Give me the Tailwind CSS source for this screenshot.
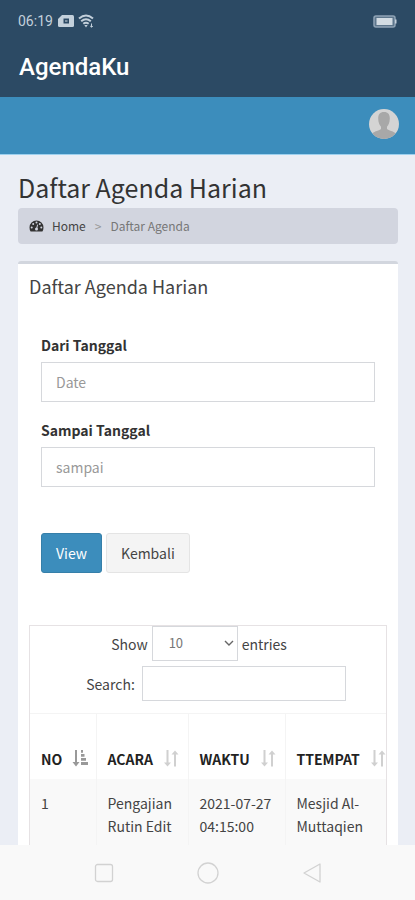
<!DOCTYPE html>
<html lang="id">
<head>
<meta charset="utf-8">
<meta name="viewport" content="width=device-width, initial-scale=1">
<title>AgendaKu</title>
<script src="https://cdn.jsdelivr.net/npm/@tailwindcss/browser@4"></script>
</head>
<body class="flex h-dvh flex-col overflow-hidden bg-[#ebeef5] font-['Noto_Sans_CJK_JP',sans-serif] text-sm text-[#444]">
  <header class="shrink-0 bg-[#2c4a64]">
    <div class="flex h-9 items-end justify-between px-[18px] pb-1 font-[Roboto,sans-serif] text-[#c3d0db]">
      <div class="flex items-center gap-1">
        <span class="text-[14px] leading-[22px]">06:19</span>
        <svg class="ml-px h-3 w-4" viewBox="0 0 16 12" aria-hidden="true"><path fill="currentColor" d="M4 0h10.500q1.500 0 1.500 1.500v9q0 1.500-1.500 1.500h-13Q0 12 0 10.500V4z"/><path fill="#2c4a64" d="M5.500 3.500h5.500v5H5.500z"/><path fill="#7d91a3" d="M7 5h2.500v2H7z"/></svg>
        <svg class="h-[14px] w-[17px]" viewBox="0 0 17 14" fill="none" stroke="currentColor" stroke-width="2" aria-hidden="true"><path d="M1 4.500q7-6 14 0M3.200 7.200q4.800-4 9.600 0M5.300 9.800q2.700-2.200 5.400 0"/><path d="M6.300 11h3.400L8 13.500z" fill="currentColor" stroke="none"/><path d="M13.500 9.500v3.500M12.200 12l1.300 1.300 1.300-1.300" stroke-width="1"/></svg>
      </div>
      <svg class="mb-1 h-[13px] w-6" viewBox="0 0 24 13" aria-hidden="true"><rect x="1" y="1" width="21" height="11" rx="2" fill="#5d768c" stroke="#8fa3b5" stroke-width="1.500"/><rect x="3.500" y="3" width="16" height="7" fill="#d3dce3"/><path d="M22 4.500h1.500v4H22z" fill="#c3d0db"/></svg>
    </div>
    <p class="px-[19px] pt-[15px] pb-[14px] font-[Roboto,sans-serif] text-[24px] leading-8 font-medium text-white">AgendaKu</p>
  </header>
  <nav class="flex h-[58px] shrink-0 items-center justify-end border-b border-[#9dd0ee] bg-[#3c8dbc] px-4 pb-[3px]">
    <button type="button" aria-label="Profil" class="size-[30px] overflow-hidden rounded-full bg-[#d4d4d4]">
      <svg class="size-full" viewBox="0 0 30 30" fill="#a8a8a8" aria-hidden="true"><path d="M15 3c-4 0-6 2.700-5.800 6.500.1 4 1.200 6.600 2.800 8.200v2.300c-1.500 1.800-6.500 1.800-8.500 4.500V30h23v-5.500c-2-2.700-7-2.700-8.500-4.500v-2.300c1.600-1.600 2.700-4.200 2.800-8.200C21 5.700 19 3 15 3z"/></svg>
    </button>
  </nav>
  <main class="min-h-0 flex-1 overflow-hidden pt-4 pr-[17px] pl-[18px]">
    <h1 class="text-[25px] leading-8 text-[#333]">Daftar Agenda Harian</h1>
    <ol class="mt-[5px] flex h-9 items-center rounded-sm bg-[#d2d5df] px-[11px] text-[12px] leading-5">
      <li><a href="#" class="flex items-center gap-2"><svg class="h-3 w-[15px]" viewBox="0 0 14 12" aria-hidden="true"><path fill="#333" d="M7 .5a7 7 0 0 0-7 7Q0 9.800 1.100 11.500h11.800Q14 9.800 14 7.500a7 7 0 0 0-7-7z"/><g fill="#d2d5df"><circle cx="2.200" cy="7.500" r="1"/><circle cx="3.700" cy="4" r="1"/><circle cx="7" cy="2.500" r="1"/><circle cx="10.300" cy="4" r="1"/><circle cx="11.800" cy="7.500" r="1"/></g><path d="M7 9.500 8 5" stroke="#d2d5df" stroke-linecap="round"/><circle cx="7" cy="9" r="1.500" fill="#d2d5df"/></svg>Home</a></li>
      <li class="px-[9px] text-[#999]" aria-hidden="true">&gt;</li>
      <li class="text-[#777]">Daftar Agenda</li>
    </ol>
    <section class="mt-[17px] rounded-t-[3px] border-t-[3px] border-[#d2d6de] bg-white px-[11px]">
      <h2 class="pt-[6px] pb-[11px] text-[18px] leading-8">Daftar Agenda Harian</h2>
      <form class="px-3 pt-5">
        <label for="dari" class="block text-[14px] leading-6 font-bold text-[#333]">Dari Tanggal</label>
        <input id="dari" type="text" placeholder="Date" class="mt-[5px] block h-10 w-full border border-[#d6d8dc] px-[14px] text-[14px] placeholder:text-[#999]">
        <label for="sampai" class="mt-4 block text-[14px] leading-6 font-bold text-[#333]">Sampai Tanggal</label>
        <input id="sampai" type="text" placeholder="sampai" class="mt-[5px] block h-10 w-full border border-[#d6d8dc] px-[14px] text-[14px] placeholder:text-[#999]">
        <div class="mt-[46px] flex gap-1">
          <button type="button" class="h-10 rounded-[3px] border border-[#367fa9] bg-[#3c8dbc] px-[14px] text-[14px] text-white">View</button>
          <button type="button" class="h-10 rounded-[3px] border border-[#e4e4e4] bg-[#f4f4f4] px-[14px] text-[14px]">Kembali</button>
        </div>
      </form>
      <div class="mt-[52px] overflow-hidden border border-[#e6e2e4] text-[14px]">
        <div class="flex items-center justify-center gap-1 pr-[18px]">
          <label for="jumlah">Show</label>
          <div class="relative">
            <select id="jumlah" class="h-[35px] w-[86px] appearance-none border border-[#d6d8dc] px-4 text-[13px] text-[#777]"><option>10</option><option>25</option><option>50</option></select>
            <svg class="pointer-events-none absolute top-[14px] right-1 h-[7px] w-[10px]" viewBox="0 0 10 7" fill="none" stroke="#666" stroke-width="1.400" aria-hidden="true"><path d="m1 1 4 4 4-4"/></svg>
          </div>
          <span>entries</span>
        </div>
        <div class="mt-[5px] flex items-center justify-center gap-[7px] pl-4">
          <label for="cari">Search:</label>
          <input id="cari" type="search" class="h-[35px] w-[204px] border border-[#d6d8dc] px-3">
        </div>
        <table class="mt-3 w-[370px] table-fixed border-t border-[#f4f4f4] text-left">
          <colgroup><col class="w-[66px]"><col class="w-[92px]"><col class="w-[97px]"><col></colgroup>
          <thead>
            <tr class="h-[65px] align-bottom text-[#222]">
              <th scope="col" class="border-r border-[#f4f4f4] pb-2 pl-[11px]"><span class="flex items-center gap-[10px] leading-6">NO<svg class="h-[17px] w-4" viewBox="0 0 16 17" fill="#999" aria-hidden="true"><path d="M3 0h2v12h2.500L4 16.500.5 12H3zM9 0h2v2.800H9zM9 4h3.500v2.800H9zM9 8h5v2.800H9zM9 12h7v3H9z"/></svg></span></th>
              <th scope="col" class="border-r border-[#f4f4f4] pb-2 pl-[11px]"><span class="flex items-center gap-[10px] leading-6">ACARA<svg class="h-[17px] w-4" viewBox="0 0 16 17" fill="#d0d0d0" aria-hidden="true"><path d="M3.500 0h2v12.500H8l-3.500 4-3.500-4h2.500zM11 16.500h2V4.500h2.500L12 .5l-3.500 4H11z"/></svg></span></th>
              <th scope="col" class="border-r border-[#f4f4f4] pb-2 pl-[11px]"><span class="flex items-center gap-[10px] leading-6">WAKTU<svg class="h-[17px] w-4" viewBox="0 0 16 17" fill="#d0d0d0" aria-hidden="true"><path d="M3.500 0h2v12.500H8l-3.500 4-3.500-4h2.500zM11 16.500h2V4.500h2.500L12 .5l-3.500 4H11z"/></svg></span></th>
              <th scope="col" class="pb-2 pl-[11px]"><span class="flex items-center gap-[10px] leading-6">TTEMPAT<svg class="h-[17px] w-4 shrink-0" viewBox="0 0 16 17" fill="#d0d0d0" aria-hidden="true"><path d="M3.500 0h2v12.500H8l-3.500 4-3.500-4h2.500zM11 16.500h2V4.500h2.500L12 .5l-3.500 4H11z"/></svg></span></th>
            </tr>
          </thead>
          <tbody>
            <tr class="h-24 bg-[#f9f9f9] align-top leading-[23px]">
              <td class="border-r border-[#f4f4f4] py-[13px] pl-[11px]">1</td>
              <td class="border-r border-[#f4f4f4] py-[13px] pl-[11px]">Pengajian<br>Rutin Edit</td>
              <td class="border-r border-[#f4f4f4] py-[13px] pl-[11px]">2021-07-27<br>04:15:00</td>
              <td class="py-[13px] pl-[11px]">Mesjid Al-<br>Muttaqien</td>
            </tr>
          </tbody>
        </table>
      </div>
    </section>
  </main>
  <footer class="flex h-[55px] shrink-0 items-center justify-center gap-[83px] bg-[#f9f9f9]">
    <button type="button" aria-label="Aplikasi terbaru"><svg class="size-5" viewBox="0 0 20 20" fill="none" stroke="#d2d2d2" stroke-width="1.300" aria-hidden="true"><rect x="1.500" y="1.500" width="17" height="17" rx="2"/></svg></button>
    <button type="button" aria-label="Beranda"><svg class="size-[22px]" viewBox="0 0 22 22" fill="none" stroke="#d2d2d2" stroke-width="1.300" aria-hidden="true"><circle cx="11" cy="11" r="10"/></svg></button>
    <button type="button" aria-label="Kembali"><svg class="size-5" viewBox="0 0 20 20" fill="none" stroke="#d2d2d2" stroke-width="1.300" stroke-linejoin="round" aria-hidden="true"><path d="M18 1v18L2 10z"/></svg></button>
  </footer>
</body>
</html>
